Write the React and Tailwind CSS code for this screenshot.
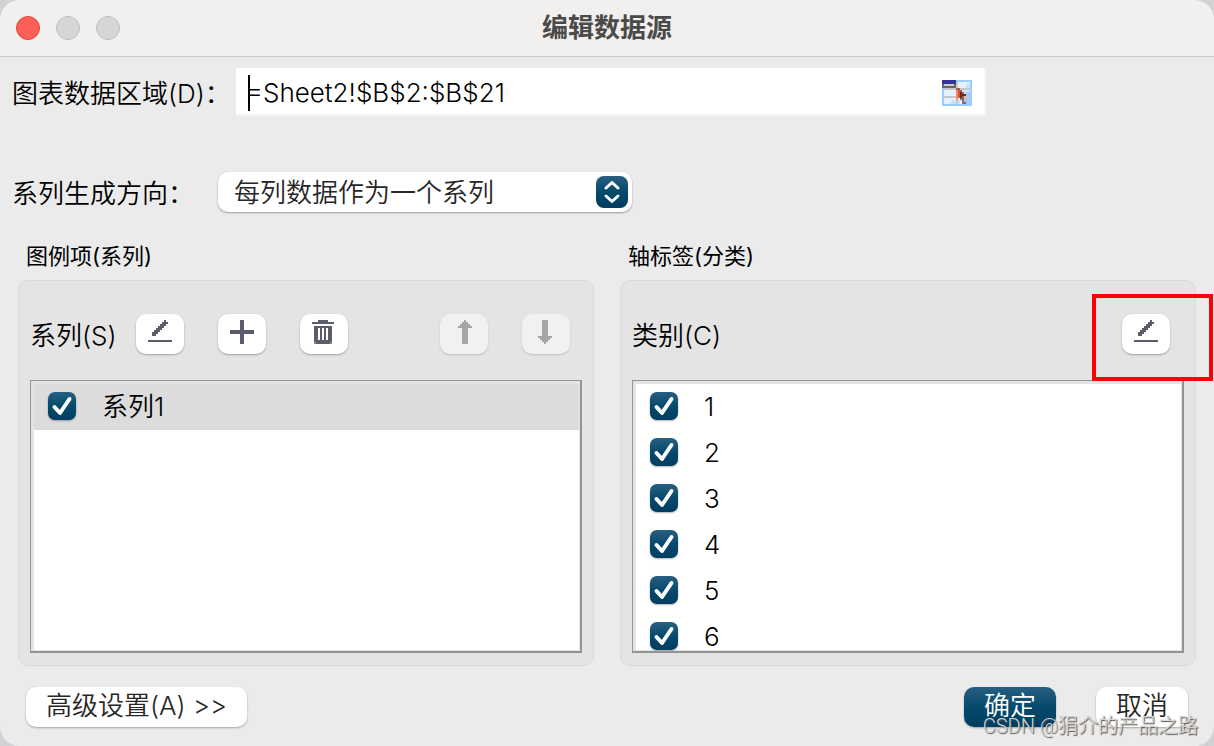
import { useState } from 'react';

const categories = ['1', '2', '3', '4', '5', '6'];

function EditIcon() {
  return (
    <svg viewBox="0 0 24 24" className="h-6 w-6" fill="#5b5e6a" shapeRendering="crispEdges" aria-hidden="true">
      <path d="M4 12h2v-2h2v-2h2v-2h2v-2h2v-2h2v-2h2v2h2v2h-2v2h-2v2h-2v2h-2v2h-2v2h-2v2H4z" />
      <path d="M0 20h24v2H0z" />
    </svg>
  );
}

function PlusIcon() {
  return (
    <svg viewBox="0 0 24 24" className="h-6 w-6" fill="#5b5e6a" shapeRendering="crispEdges" aria-hidden="true">
      <path d="M10 0h4v24h-4z M0 10h24v4H0z" />
    </svg>
  );
}

function TrashIcon() {
  return (
    <svg viewBox="0 0 24 24" className="h-6 w-6" fill="#5b5e6a" shapeRendering="crispEdges" aria-hidden="true">
      <path d="M6 0h10v2h6v2H0V2h6z" />
      <path fillRule="evenodd" d="M2 6h18v18H2z M6 8v12h2V8z M10 8v12h2V8z M14 8v12h2V8z" />
      <path fill="#8c8e97" d="M2 22h2v2H2z M18 22h2v2h-2z" />
    </svg>
  );
}

function ArrowIcon({ down }) {
  return (
    <svg
      viewBox="0 0 24 24"
      className={down ? 'h-6 w-6 rotate-180' : 'h-6 w-6'}
      fill="#a5a6aa"
      shapeRendering="crispEdges"
      aria-hidden="true"
    >
      <path d="M12 0h2v2h2v2h2v2h2v2h-4v16h-6V8H6V6h2V4h2V2h2z" />
    </svg>
  );
}

function RangeIcon() {
  return (
    <svg viewBox="0 0 30 26" className="h-[26px] w-[30px]" shapeRendering="crispEdges" aria-hidden="true">
      <path fill="#99ccff" d="M0 0h30v26H0z" />
      <path fill="#e6f2ff" d="M2 2h26v22H2z" />
      <path fill="#cfe0fe" d="M24 4h4v4h-4z M20 10h8v6h-8z M10 20h4v4h-4z M8 22h2v2H8z M16 20h2v4h-2z" />
      <path fill="#a9c4ff" d="M24 12h4v4h-4z M22 18h6v6h-6z" />
      <path fill="#c8c8cc" d="M2 8h26v2H2z M2 16h26v2H2z M14 2h2v22h-2z" />
      <path fill="#333399" d="M0 0h14v4H0z" />
      <path fill="#666666" d="M0 4h14v4H0z" />
      <path fill="#cccccc" d="M2 4h10v2H2z" />
      <path fill="#f08a6c" d="M14 8h2v12h-2z" />
      <path fill="#d4552f" d="M16 10h2v8h-2z" />
      <path fill="#a8604c" d="M14 8h2v2h-2z M16 8h2v2h-2z M18 10h2v2h-2z M20 12h2v2h-2z" />
      <path fill="#6b2a20" d="M18 12h2v2h4v2h-4v2h-2z" />
      <path fill="#8a6a62" d="M18 18h4v2h-4z M20 20h2v4h-2z M22 22h2v2h-2z M20 16h2v2h-2z" />
    </svg>
  );
}

function ToolButton({ label, disabled, children }) {
  return (
    <button
      type="button"
      aria-label={label}
      disabled={disabled}
      className="flex h-10 w-12 items-start justify-center rounded-[10px] bg-white pt-[6px] shadow-[0_1px_2px_rgba(0,0,0,0.3)] disabled:bg-[#f1f1f1] disabled:shadow-[0_1px_2px_rgba(0,0,0,0.16)]"
    >
      {children}
    </button>
  );
}

function CheckRow({ label, selected }) {
  const [checked, setChecked] = useState(true);

  return (
    <li className={selected ? 'bg-[#dcdcdc]' : ''}>
      <label className="flex h-[46px] items-start gap-[26px] pt-2 pl-[14px]">
        <span className="relative block h-7 w-7">
          <input
            type="checkbox"
            checked={checked}
            onChange={(e) => setChecked(e.target.checked)}
            className="peer block h-7 w-7 appearance-none rounded-[7px] bg-white shadow-[0_1px_2px_rgba(0,0,0,0.3)] checked:bg-linear-to-b checked:from-[#265f82] checked:via-[#044a6c] checked:to-[#003d60]"
          />
          <svg
            viewBox="0 0 28 28"
            className="pointer-events-none absolute inset-0 hidden h-7 w-7 peer-checked:block"
            fill="none"
            stroke="white"
            strokeWidth="4"
            strokeLinecap="round"
            strokeLinejoin="round"
            aria-hidden="true"
          >
            <path d="M6.5 15l5.5 6L21.5 7" />
          </svg>
        </span>
        <span className="leading-[30px]">{label}</span>
      </label>
    </li>
  );
}

function CheckList({ children }) {
  return (
    <ul className="h-[273px] overflow-hidden border border-r-2 border-b-2 border-[#949494] bg-white shadow-[inset_3px_3px_0_#e4e4e4,inset_-1px_-1px_0_#e4e4e4] pt-[3px] pr-px pl-[3px]">
      {children}
    </ul>
  );
}

function Group({ title, children }) {
  return (
    <section>
      <h2 className="px-2 text-[22px] leading-8 font-normal">{title}</h2>
      <div className="mt-2 rounded-[10px] border border-[#d9d9d9] bg-[#e4e4e4] px-[11px] pt-[33px] pb-3">
        {children}
      </div>
    </section>
  );
}

export default function App() {
  const [range, setRange] = useState('=Sheet2!$B$2:$B$21');

  return (
    <div className="min-h-screen bg-[#d0d2d6]">
      <div className="relative flex min-h-screen flex-col overflow-hidden rounded-[20px] bg-[#ebebeb] font-['Inter','Noto_Sans_CJK_SC',sans-serif] text-[26px] leading-9 font-[350] text-black">
        {/* Title bar */}
        <header className="grid h-[57px] grid-cols-3 items-center border-b border-[#c6c6c6] bg-[#f1f0ee] px-4">
          <div className="flex gap-4">
            <button type="button" aria-label="关闭" className="h-6 w-6 rounded-full border border-[#e0443e] bg-[#ff5f57]" />
            <button type="button" aria-label="最小化" disabled className="h-6 w-6 rounded-full border border-[#bcbbba] bg-[#d7d6d4]" />
            <button type="button" aria-label="缩放" disabled className="h-6 w-6 rounded-full border border-[#bcbbba] bg-[#d7d6d4]" />
          </div>
          <h1 className="text-center font-bold text-[#4a4a49]">编辑数据源</h1>
        </header>

        <main className="px-[18px] pt-[11px]">
          <div className="-ml-[6px] flex items-center">
            <label htmlFor="range" className="w-56 shrink-0 pt-1">图表数据区域(D)：</label>
            <div className="flex h-12 w-[750px] items-center border-r-2 border-b-2 border-[#f6f6f6] bg-white px-3 pt-1">
              <span className="h-9 w-[2px] shrink-0 bg-black" />
              <input
                id="range"
                value={range}
                onChange={(e) => setRange(e.target.value)}
                className="-ml-1 min-w-0 flex-1 bg-transparent outline-none"
              />
              <button type="button" aria-label="选择区域">
                <RangeIcon />
              </button>
            </div>
          </div>

          <div className="mt-14 -ml-[6px] flex items-center">
            <label htmlFor="direction" className="w-[206px] shrink-0 pt-1">系列生成方向：</label>
            <div className="relative">
              <select
                id="direction"
                className="block h-10 w-[414px] appearance-none rounded-[10px] bg-white pt-[2px] pl-4 text-[#262626] shadow-[0_1px_2px_rgba(0,0,0,0.35)]"
              >
                <option>每列数据作为一个系列</option>
                <option>每行数据作为一个系列</option>
              </select>
              <span className="pointer-events-none absolute top-1 right-1 flex h-8 w-8 items-center justify-center rounded-[8px] bg-linear-to-b from-[#265f82] via-[#044a6c] to-[#003d60]">
                <svg viewBox="0 0 32 32" className="h-8 w-8" fill="none" stroke="white" strokeWidth="3" strokeLinecap="round" strokeLinejoin="round" aria-hidden="true">
                  <path d="M10 12l6-5.500L22 12M10 20l6 5.500L22 20" />
                </svg>
              </span>
            </div>
          </div>

          <div className="mt-7 grid grid-cols-2 gap-[26px]">
            <Group title="图例项(系列)">
              <div className="flex items-center pr-3">
                <span className="w-[106px] pt-1 whitespace-nowrap">系列(S)</span>
                <div className="flex gap-[34px]">
                  <ToolButton label="编辑"><EditIcon /></ToolButton>
                  <ToolButton label="添加"><PlusIcon /></ToolButton>
                  <ToolButton label="删除"><TrashIcon /></ToolButton>
                </div>
                <div className="ml-auto flex gap-[34px]">
                  <ToolButton label="上移" disabled><ArrowIcon /></ToolButton>
                  <ToolButton label="下移" disabled><ArrowIcon down /></ToolButton>
                </div>
              </div>
              <div className="mt-[26px]">
                <CheckList>
                  <CheckRow label="系列1" selected />
                </CheckList>
              </div>
            </Group>

            <Group title="轴标签(分类)">
              <div className="flex items-center justify-between pr-[14px]">
                <span className="pt-1">类别(C)</span>
                <div className="relative">
                  <ToolButton label="编辑类别"><EditIcon /></ToolButton>
                  {/* Callout */}
                  <div className="pointer-events-none absolute -top-5 -left-[30px] z-10 h-[87px] w-[121px] border-4 border-[#ff0000]" />
                </div>
              </div>
              <div className="mt-[26px]">
                <CheckList>
                  {categories.map((name) => (
                    <CheckRow key={name} label={name} />
                  ))}
                </CheckList>
              </div>
            </Group>
          </div>
        </main>

        <footer className="mt-[21px] flex items-center px-[26px]">
          <button type="button" className="h-10 rounded-[10px] bg-white px-5 pb-[2px] text-[#262626] shadow-[0_1px_2px_rgba(0,0,0,0.3)]">
            高级设置(A) &gt;&gt;
          </button>
          <div className="ml-auto flex gap-10">
            <button type="button" className="h-10 w-[92px] rounded-[10px] bg-linear-to-b from-[#265f82] via-[#044a6c] to-[#003d60] pb-[2px] text-white shadow-[0_1px_2px_rgba(0,0,0,0.3)]">
              确定
            </button>
            <button type="button" className="h-10 w-[92px] rounded-[10px] bg-white pb-[2px] text-[#262626] shadow-[0_1px_2px_rgba(0,0,0,0.3)]">
              取消
            </button>
          </div>
        </footer>

        <span className="pointer-events-none absolute right-4 bottom-1 font-['Roboto','Noto_Sans_CJK_SC',sans-serif] text-[20px] leading-8 text-[#d4d4d4] [text-shadow:1px_1px_1px_#555]">
          CSDN @狷介的产品之路
        </span>
      </div>
    </div>
  );
}
